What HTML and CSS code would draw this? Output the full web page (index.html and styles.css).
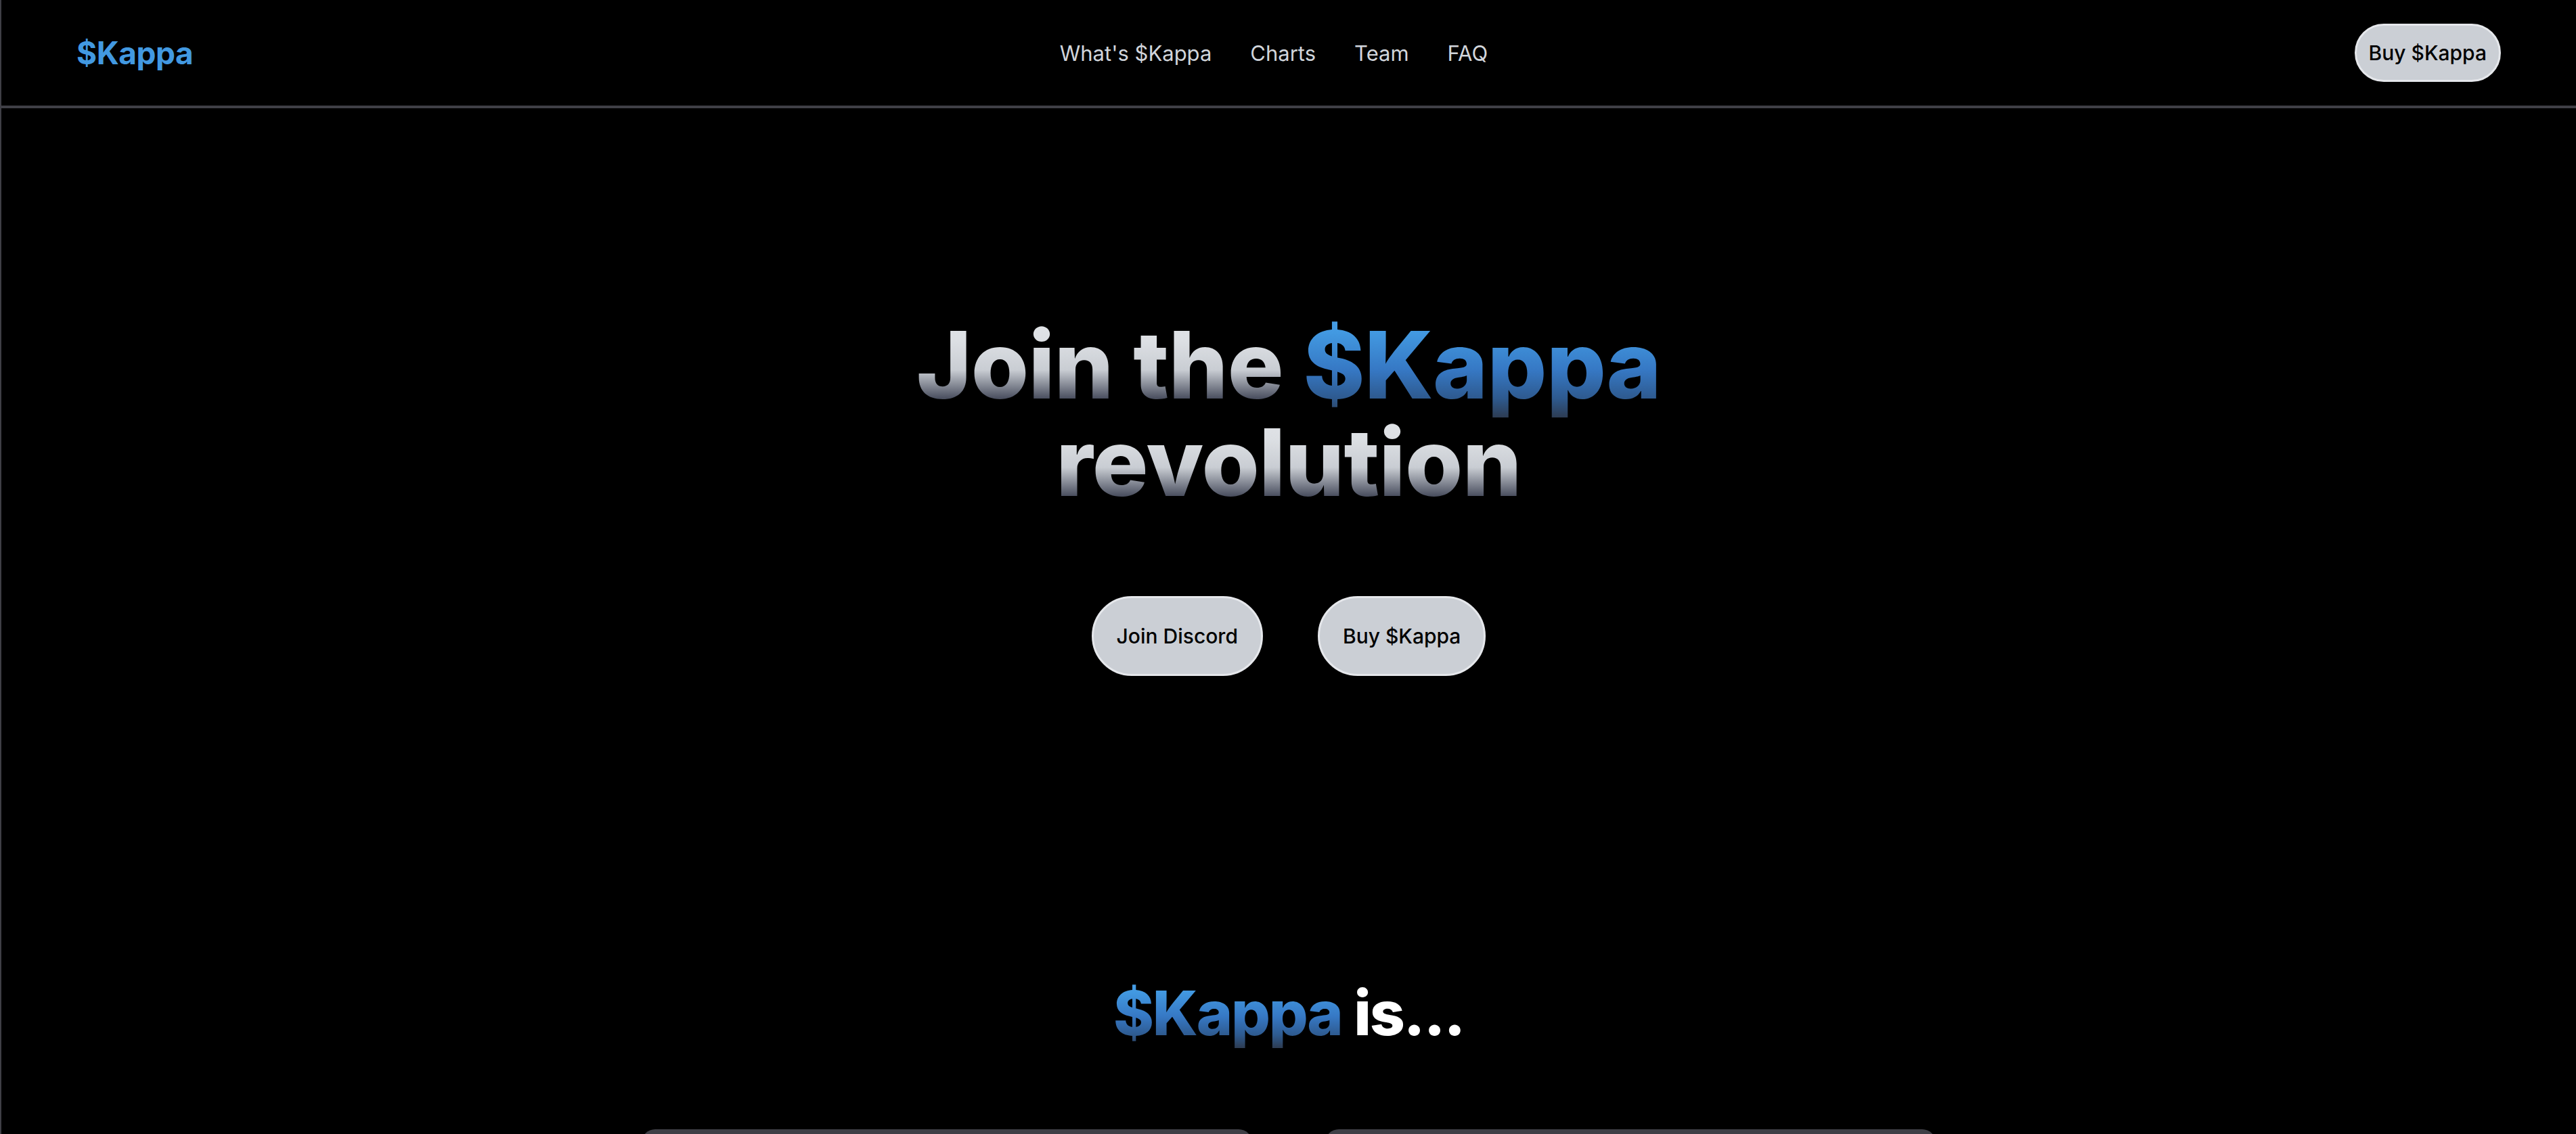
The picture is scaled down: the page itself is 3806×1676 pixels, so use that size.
FILE: index.html
```html
<!DOCTYPE html>
<html lang="en">
<head>
<meta charset="utf-8">
<title>$Kappa</title>
<link rel="stylesheet" href="styles.css">
</head>
<body>
<header class="site-header">
  <a class="logo" href="#">$Kappa</a>
  <nav class="main-nav">
    <a href="#">What's $Kappa</a>
    <a href="#">Charts</a>
    <a href="#">Team</a>
    <a href="#">FAQ</a>
  </nav>
  <a class="pill pill-small" href="#">Buy $Kappa</a>
</header>

<main>
  <section class="hero">
    <h1 class="hero-title">
      <span class="line"><span class="grad-gray">Join the </span><span class="grad-blue">$Kappa</span></span>
      <span class="line"><span class="grad-gray">revolution</span></span>
    </h1>
    <div class="hero-actions">
      <a class="pill pill-large" href="#">Join Discord</a>
      <a class="pill pill-large" href="#">Buy $Kappa</a>
    </div>
  </section>

  <section class="about">
    <h2 class="about-title"><span class="grad-blue">$Kappa</span> <span class="white">is...</span></h2>
    <div class="cards">
      <div class="card"></div>
      <div class="card"></div>
    </div>
  </section>
</main>
</body>
</html>
```

FILE: styles.css
```css
* { box-sizing: border-box; }

html, body {
  margin: 0;
  padding: 0;
  background: #000;
}

body {
  min-height: 100vh;
  border-left: 2px solid #3f3f46;
  font-family: Inter, "Noto Sans", "Liberation Sans", sans-serif;
  color: #d1d5db;
  overflow: hidden;
}

a { text-decoration: none; color: inherit; }

.site-header {
  height: 160px;
  display: flex;
  align-items: center;
  justify-content: space-between;
  padding: 0 111px;
  border-bottom: 4px solid #3f3f46;
}

.logo {
  font-size: 46px;
  font-weight: 700;
  color: #4299e1;
  letter-spacing: -0.01em;
}

.main-nav {
  display: flex;
  gap: 57px;
  font-size: 31px;
  color: #d1d5db;
}

.pill {
  display: inline-block;
  background: #cbcfd5;
  border: 3px solid #e5e7eb;
  border-radius: 999px;
  color: #000;
  font-weight: 500;
  font-size: 30px;
  line-height: 36px;
}

.pill-small { padding: 22px 18px; }
.pill-large { padding: 38px 34px; }

.hero {
  padding-top: 307px;
  text-align: center;
}

.hero-title {
  margin: 0;
  font-size: 138px;
  line-height: 144px;
  font-weight: 800;
  letter-spacing: -0.005em;
}

.hero-title .line { display: block; }

.grad-gray {
  background: linear-gradient(180deg, #e5e7eb 0%, #dcdfe3 30%, #c9cdd3 55%, #4b5060 80%, #27272a 100%);
  -webkit-background-clip: text;
  background-clip: text;
  color: transparent;
}

.grad-blue {
  background: linear-gradient(180deg, #4ba3ec 0%, #4299e1 22%, #3678c4 55%, #2e5a8f 80%, #2d3748 100%);
  -webkit-background-clip: text;
  background-clip: text;
  color: transparent;
}

.white { color: #fff; }

.hero-actions {
  margin-top: 126px;
  display: flex;
  justify-content: center;
  gap: 81px;
}

.about {
  margin-top: 444px;
  text-align: center;
}

.about-title {
  margin: 0;
  font-size: 91px;
  line-height: 109px;
  font-weight: 800;
  letter-spacing: -0.025em;
}

.cards {
  margin: 117px auto 0;
  width: 1912px;
  display: grid;
  grid-template-columns: 1fr 1fr;
  gap: 108px;
}

.card {
  height: 600px;
  background: #3f3f46;
  border-radius: 20px;
}
```
